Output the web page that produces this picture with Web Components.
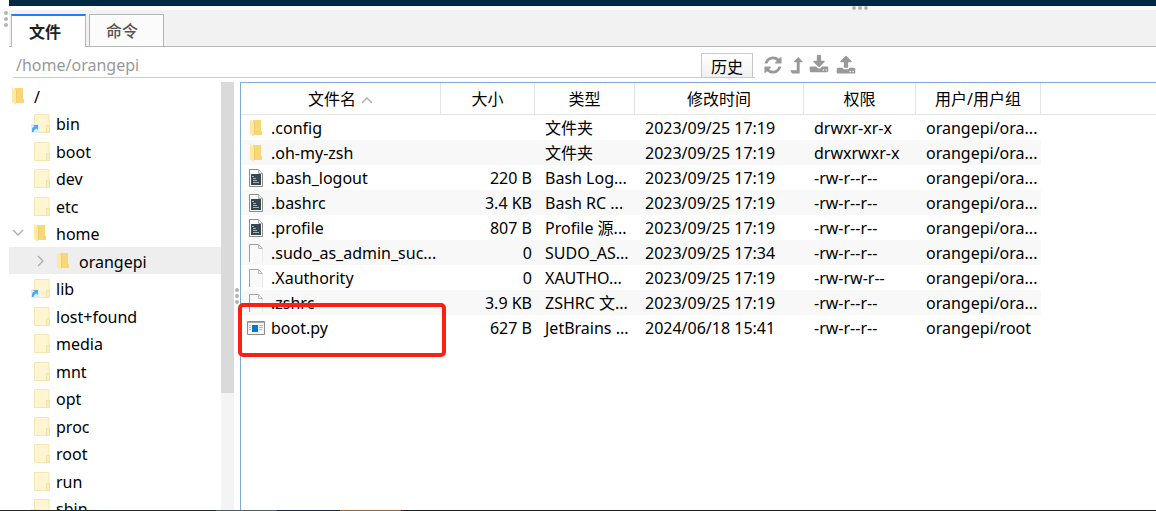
<!DOCTYPE html>
<html lang="zh-CN">
<head>
<meta charset="utf-8">
<title>文件</title>
<style>
html, body { height: 100%; }
body {
  margin: 0;
  overflow: hidden;
  background: #fff;
  color: #000;
  font: 16px/24px "Noto Sans", "Noto Sans CJK SC", sans-serif;
}
</style>
</head>
<body>
<file-manager></file-manager>
<script>
const define = (name, html, setup) => {
  const template = document.createElement('template');
  template.innerHTML = html;
  customElements.define(name, class extends HTMLElement {
    constructor() {
      super();
      this.attachShadow({ mode: 'open' }).append(template.content.cloneNode(true));
    }
    connectedCallback() {
      if (setup && !this.ready) { this.ready = true; setup(this, this.shadowRoot); }
    }
  });
};

const folder = '<path d="M.5 1.500h14.500v18H.5z" fill="#fff5d2" stroke="#f6e6b2"/><path d="M12.500 12.500h3v7h-3z" fill="#fbeec4" stroke="#f3e2a8"/>';
const icons = {
  folder: [16, 20, folder],
  link: [16, 20, folder + '<path d="M-3 11h8v9h-8z" fill="#dceefb"/><path d="M-2 19v-3q0-2 2.500-2.500L-1 12h5v5l-1.500-1.500Q0 16-.5 19z" fill="#58a8e4"/>'],
  open: [12, 18, '<path d="M3 1h8v11h1v4H3z" fill="#f8d778"/><path d="M0 0l4 3v15l-4-3z" fill="#ffe8a4"/><path d="M4.500 3v13" stroke="#f2cd68"/>'],
  script: [14, 18, '<path d="M.5.5h9l4 4v13H.5z" fill="#fafafa" stroke="#8b8b8b"/><path d="M9.500.5v4h4" fill="#fff" stroke="#aaa"/><path d="M2 5h10v11H2z" fill="#36474f"/><path d="M3 7h2v1H3zM4 9h3v1H4zM4 11h4v1H4zM4 13h6v1H4z" fill="#a5b0b5"/>'],
  file: [14, 18, '<path d="M1 1h8l4 4v13H1z" fill="#f9f9f9"/><path d="M.5 18V.5h9" fill="none" stroke="#a0a0a0"/><path d="M9.500.5v4h4z" fill="#eee" stroke="#bbb"/><path d="M13.500 5v13" stroke="#ececec"/>'],
  app: [18, 14, '<path d="M.5.5h17v13H.5z" fill="#f5f5f5" stroke="#8c8c8c"/><path d="M1 1.500h16" stroke="#aaa"/><path d="M5 4h6v7H5z" fill="#0078d7"/><path d="M2 4.500h2M2 6.500h2M2 8.500h2M12 4.500h4M12 6.500h4M12 8.500h3" stroke="#bbb"/>'],
  down: [12, 8, '<path d="M1 1l5 5 5-5" fill="none" stroke="#aaa" stroke-width="1.300"/>'],
  right: [8, 12, '<path d="M1 1l5 5-5 5" fill="none" stroke="#aaa" stroke-width="1.300"/>'],
  up: [12, 8, '<path d="M1 6l5-5 5 5" fill="none" stroke="#aaa" stroke-width="1.300"/>'],
  refresh: [20, 20, '<path transform="scale(.01116)" d="M1639 1056q0 5-1 7-64 268-268 434.500t-478 166.500q-146 0-282.500-55t-243.500-157l-129 129q-19 19-45 19t-45-19-19-45v-448q0-26 19-45t45-19h448q26 0 45 19t19 45-19 45l-137 137q71 66 161 102t187 36q134 0 250-65t186-179q11-17 53-117 8-23 30-23h192q13 0 22.500 9.500t9.500 22.500zm25-800v448q0 26-19 45t-45 19h-448q-26 0-45-19t-19-45 19-45l138-138q-148-137-349-137-134 0-250 65t-186 179q-11 17-53 117-8 23-30 23h-199q-13 0-22.500-9.500t-9.500-22.500v-7q65-268 270-434.500t480-166.500q146 0 284 55.500t245 156.500l130-129q19-19 45-19t45 19 19 45z"/>'],
  level: [12, 20, '<path d="M8.300 2l4.200 4.500q.3.800-.5.800H9.700v10.700q0 .5-.5.500H2.500q-.3 0-.5-.3L.5 16q-.2-.6.400-.7H6.700v-8H4.300q-.8 0-.5-.8z"/>'],
  download: [20, 20, '<path transform="scale(.01116)" d="M1344 1344q0-26-19-45t-45-19-45 19-19 45 19 45 45 19 45-19 19-45zm256 0q0-26-19-45t-45-19-45 19-19 45 19 45 45 19 45-19 19-45zm128-224v320q0 40-28 68t-68 28h-1472q-40 0-68-28t-28-68v-320q0-40 28-68t68-28h465l135 136q58 56 136 56t136-56l136-136h464q40 0 68 28t28 68zm-325-569q17 41-14 70l-448 448q-18 19-45 19t-45-19l-448-448q-31-29-14-70 17-39 59-39h256v-448q0-26 19-45t45-19h256q26 0 45 19t19 45v448h256q42 0 59 39z"/>'],
  upload: [20, 20, '<path transform="scale(.01116)" d="M1344 1472q0-26-19-45t-45-19-45 19-19 45 19 45 45 19 45-19 19-45zm256 0q0-26-19-45t-45-19-45 19-19 45 19 45 45 19 45-19 19-45zm128-224v320q0 40-28 68t-68 28h-1472q-40 0-68-28t-28-68v-320q0-40 28-68t68-28h427q21 56 70.500 92t110.500 36h256q61 0 110.500-36t70.500-92h427q40 0 68 28t28 68zm-325-648q-17 40-59 40h-256v448q0 26-19 45t-45 19h-256q-26 0-45-19t-19-45v-448h-256q-42 0-59-40-17-39 14-69l448-448q18-19 45-19t45 19l448 448q31 30 14 69z"/>']
};

define('ui-icon', `<style>
  :host { display: inline-flex; flex: none; }
  svg { display: block; overflow: visible; fill: currentColor; }
</style>`, (el, root) => {
  const [w, h, art] = icons[el.getAttribute('name')];
  root.innerHTML += `<svg width="${w}" height="${h}" viewBox="0 0 ${w} ${h}" aria-hidden="true">${art}</svg>`;
});

define('drag-grip', `<style>
  :host { display: flex; gap: 2px; }
  :host([vertical]) { flex-direction: column; }
  i { width: 4px; height: 4px; border-radius: 50%; background: #b4b4b4; }
</style><i></i><i></i><i></i>`);

define('tab-bar', `<style>
  :host { display: flex; gap: 3px; padding: 4px 2px 0; height: 32px; background: #f2f2f2; border-bottom: 1px solid #b5b5b5; }
  button {
    box-sizing: border-box; width: 75px; height: 32px; padding: 0 16px; text-align: left;
    font: inherit; font-weight: 500; color: #555; background: #fbfbfb;
    border: 1px solid #b5b5b5; border-bottom: 0;
  }
  button[aria-selected=true] { height: 33px; padding: 0 17px; border-top: 2px solid #1684fc; font-weight: 700; color: #222; background: #fff; }
</style>
<button role="tab" aria-selected="true">文件</button><button role="tab" aria-selected="false">命令</button>`, (el) => el.setAttribute('role', 'tablist'));

define('path-bar', `<style>
  :host { display: flex; align-items: flex-start; padding: 6px 4px 4px; height: 25px; }
  form { display: flex; flex: 0 1 740px; border-bottom: 1px solid #ccc; height: 24px; padding-right: 2px; }
  input { flex: 1; min-width: 0; border: 0; padding: 0 3px; outline: 0; background: none; font: inherit; color: #999; height: 24px; }
  button { font: inherit; color: #000; }
  .history { box-sizing: border-box; width: 52px; height: 25px; padding: 0; border: 1px solid #c8c8c8; background: linear-gradient(#fff, #f0f0f0); line-height: 26px; }
  nav { display: flex; gap: 7px; padding: 2px 0 0 8px; color: #999; }
  nav button { display: flex; padding: 0; border: 0; background: none; color: inherit; }
</style>
<form><input aria-label="路径" value="/home/orangepi"><button class="history" type="button">历史</button></form>
<nav><button aria-label="刷新"><ui-icon name="refresh"></ui-icon></button><button aria-label="上级"><ui-icon name="level"></ui-icon></button><button aria-label="下载"><ui-icon name="download"></ui-icon></button><button aria-label="上传"><ui-icon name="upload"></ui-icon></button></nav>`);

define('tree-item', `<style>
  :host { display: flex; box-sizing: border-box; align-items: center; height: 27px; padding-left: 3px; }
  :host(:nth-of-type(even)) { height: 28px; }
  :host([level="2"]) { padding-left: 26px; }
  :host([selected]) { background: #eee; }
  .arrow { display: flex; justify-content: center; width: 12px; margin-right: 10px; }
  :host([level="0"]) .arrow { display: none; }
  .icon { display: flex; width: 16px; margin-right: 6px; }
  .label { padding-top: 2px; }
</style><span class="arrow"></span><span class="icon"></span><span class="label"><slot></slot></span>`, (el, root) => {
  const put = (sel, name) => name && (root.querySelector(sel).innerHTML = `<ui-icon name="${name}"></ui-icon>`);
  put('.arrow', el.getAttribute('arrow'));
  put('.icon', el.getAttribute('icon') || 'folder');
  el.setAttribute('role', 'treeitem');
});

define('folder-tree', `<style>
  :host { display: flex; overflow: hidden; }
  .list { flex: 1; min-width: 0; }
  .track { width: 13px; background: #f4f4f4; }
  .thumb { height: 311px; background: #dadada; }
</style>
<div class="list" role="tree">
<tree-item level="0" icon="open">/</tree-item>
<tree-item icon="link">bin</tree-item>
<tree-item>boot</tree-item>
<tree-item>dev</tree-item>
<tree-item>etc</tree-item>
<tree-item icon="open" arrow="down">home</tree-item>
<tree-item level="2" icon="open" arrow="right" selected>orangepi</tree-item>
<tree-item icon="link">lib</tree-item>
<tree-item>lost+found</tree-item>
<tree-item>media</tree-item>
<tree-item>mnt</tree-item>
<tree-item>opt</tree-item>
<tree-item>proc</tree-item>
<tree-item>root</tree-item>
<tree-item>run</tree-item>
<tree-item icon="link">sbin</tree-item>
</div><div class="track"><div class="thumb"></div></div>`);

const files = [
  ['open', '.config', '', '文件夹', '2023/09/25 17:19', 'drwxr-xr-x', 'orangepi/ora...'],
  ['open', '.oh-my-zsh', '', '文件夹', '2023/09/25 17:19', 'drwxrwxr-x', 'orangepi/ora...'],
  ['script', '.bash_logout', '220 B', 'Bash Log...', '2023/09/25 17:19', '-rw-r--r--', 'orangepi/ora...'],
  ['script', '.bashrc', '3.4 KB', 'Bash RC ...', '2023/09/25 17:19', '-rw-r--r--', 'orangepi/ora...'],
  ['script', '.profile', '807 B', 'Profile 源...', '2023/09/25 17:19', '-rw-r--r--', 'orangepi/ora...'],
  ['file', '.sudo_as_admin_suc...', '0', 'SUDO_AS...', '2023/09/25 17:34', '-rw-r--r--', 'orangepi/ora...'],
  ['file', '.Xauthority', '0', 'XAUTHO...', '2023/09/25 17:19', '-rw-rw-r--', 'orangepi/ora...'],
  ['file', '.zshrc', '3.9 KB', 'ZSHRC 文...', '2023/09/25 17:19', '-rw-r--r--', 'orangepi/ora...'],
  ['app', 'boot.py', '627 B', 'JetBrains ...', '2024/06/18 15:41', '-rw-r--r--', 'orangepi/root']
];

define('file-table', `<style>
  :host { display: block; border-left: 1px solid #7fabd8; border-top: 1px solid #7fabd8; }
  table { width: 100%; table-layout: fixed; border-collapse: separate; border-spacing: 0; }
  th { box-sizing: border-box; height: 32px; padding: 1px 0 0; font-weight: 400; border-right: 1px solid #e4e4e4; border-bottom: 1px solid #e4e4e4; }
  th:last-child { border-right: 0; }
  th ui-icon { margin-left: 5px; vertical-align: middle; }
  td { box-sizing: border-box; height: 25px; padding: 2px 0 0 10px; line-height: 23px; white-space: nowrap; overflow: hidden; }
  tbody tr:nth-child(even) td:not(:last-child) { background: #f8f8f8; }
  td:nth-child(2) { text-align: right; padding: 2px 3px 0 0; }
  td:first-child { padding: 0 0 0 6px; }
  .name { display: flex; align-items: center; height: 25px; }
  .icon { display: flex; justify-content: center; width: 18px; margin-right: 6px; }
  .label { padding-top: 2px; }
  .size { width: 94px; } .name-col { width: 200px; } .type { width: 100px; }
  .date { width: 169px; } .mode { width: 112px; } .owner { width: 125px; }
</style>
<table><colgroup><col class="name-col"><col class="size"><col class="type"><col class="date"><col class="mode"><col class="owner"><col></colgroup>
<thead><tr><th>文件名<ui-icon name="up"></ui-icon></th><th>大小</th><th>类型</th><th>修改时间</th><th>权限</th><th>用户/用户组</th><th></th></tr></thead><tbody></tbody></table>`, (el, root) => {
  root.querySelector('tbody').innerHTML = files.map(([icon, name, ...rest]) =>
    `<tr><td><div class="name"><span class="icon"><ui-icon name="${icon}"></ui-icon></span><span class="label">${name}</span></div></td>${rest.map(t => `<td>${t}</td>`).join('')}<td></td></tr>`).join('');
});

define('file-manager', `<style>
  :host { display: grid; grid-template: 10px 37px 35px minmax(0, 1fr) 1px / 9px minmax(0, 1fr); height: 100vh; }
  .terminal { grid-column: 2; position: relative; border-top: 6px solid #002944; }
  .terminal drag-grip { position: absolute; right: 288px; top: 0; }
  .side { grid-row: 2; grid-column: 1; padding: 1px 0 0 4px; }
  tab-bar, path-bar { grid-column: 2; }
  .panes { grid-column: 2; position: relative; display: grid; grid-template-columns: 225px 6px minmax(0, 1fr); }
  .split { display: flex; align-items: center; justify-content: center; }
  .mark { position: absolute; box-sizing: border-box; left: 229px; top: 221px; width: 208px; height: 54px; border: 4px solid #fc2010; border-radius: 5px; }
  .edge { grid-column: 1 / -1; background: linear-gradient(90deg, #20262c 216px, #505a60 216px 277px, #1b2a3a 277px 340px, #9b6330 340px 401px, #202327 401px); }
</style>
<div class="terminal"><drag-grip></drag-grip></div>
<div class="side"><drag-grip vertical></drag-grip></div>
<tab-bar></tab-bar>
<path-bar></path-bar>
<div class="panes"><folder-tree></folder-tree><div class="split"><drag-grip vertical></drag-grip></div><file-table></file-table><div class="mark"></div></div>
<div class="edge"></div>`);
</script>
</body>
</html>
